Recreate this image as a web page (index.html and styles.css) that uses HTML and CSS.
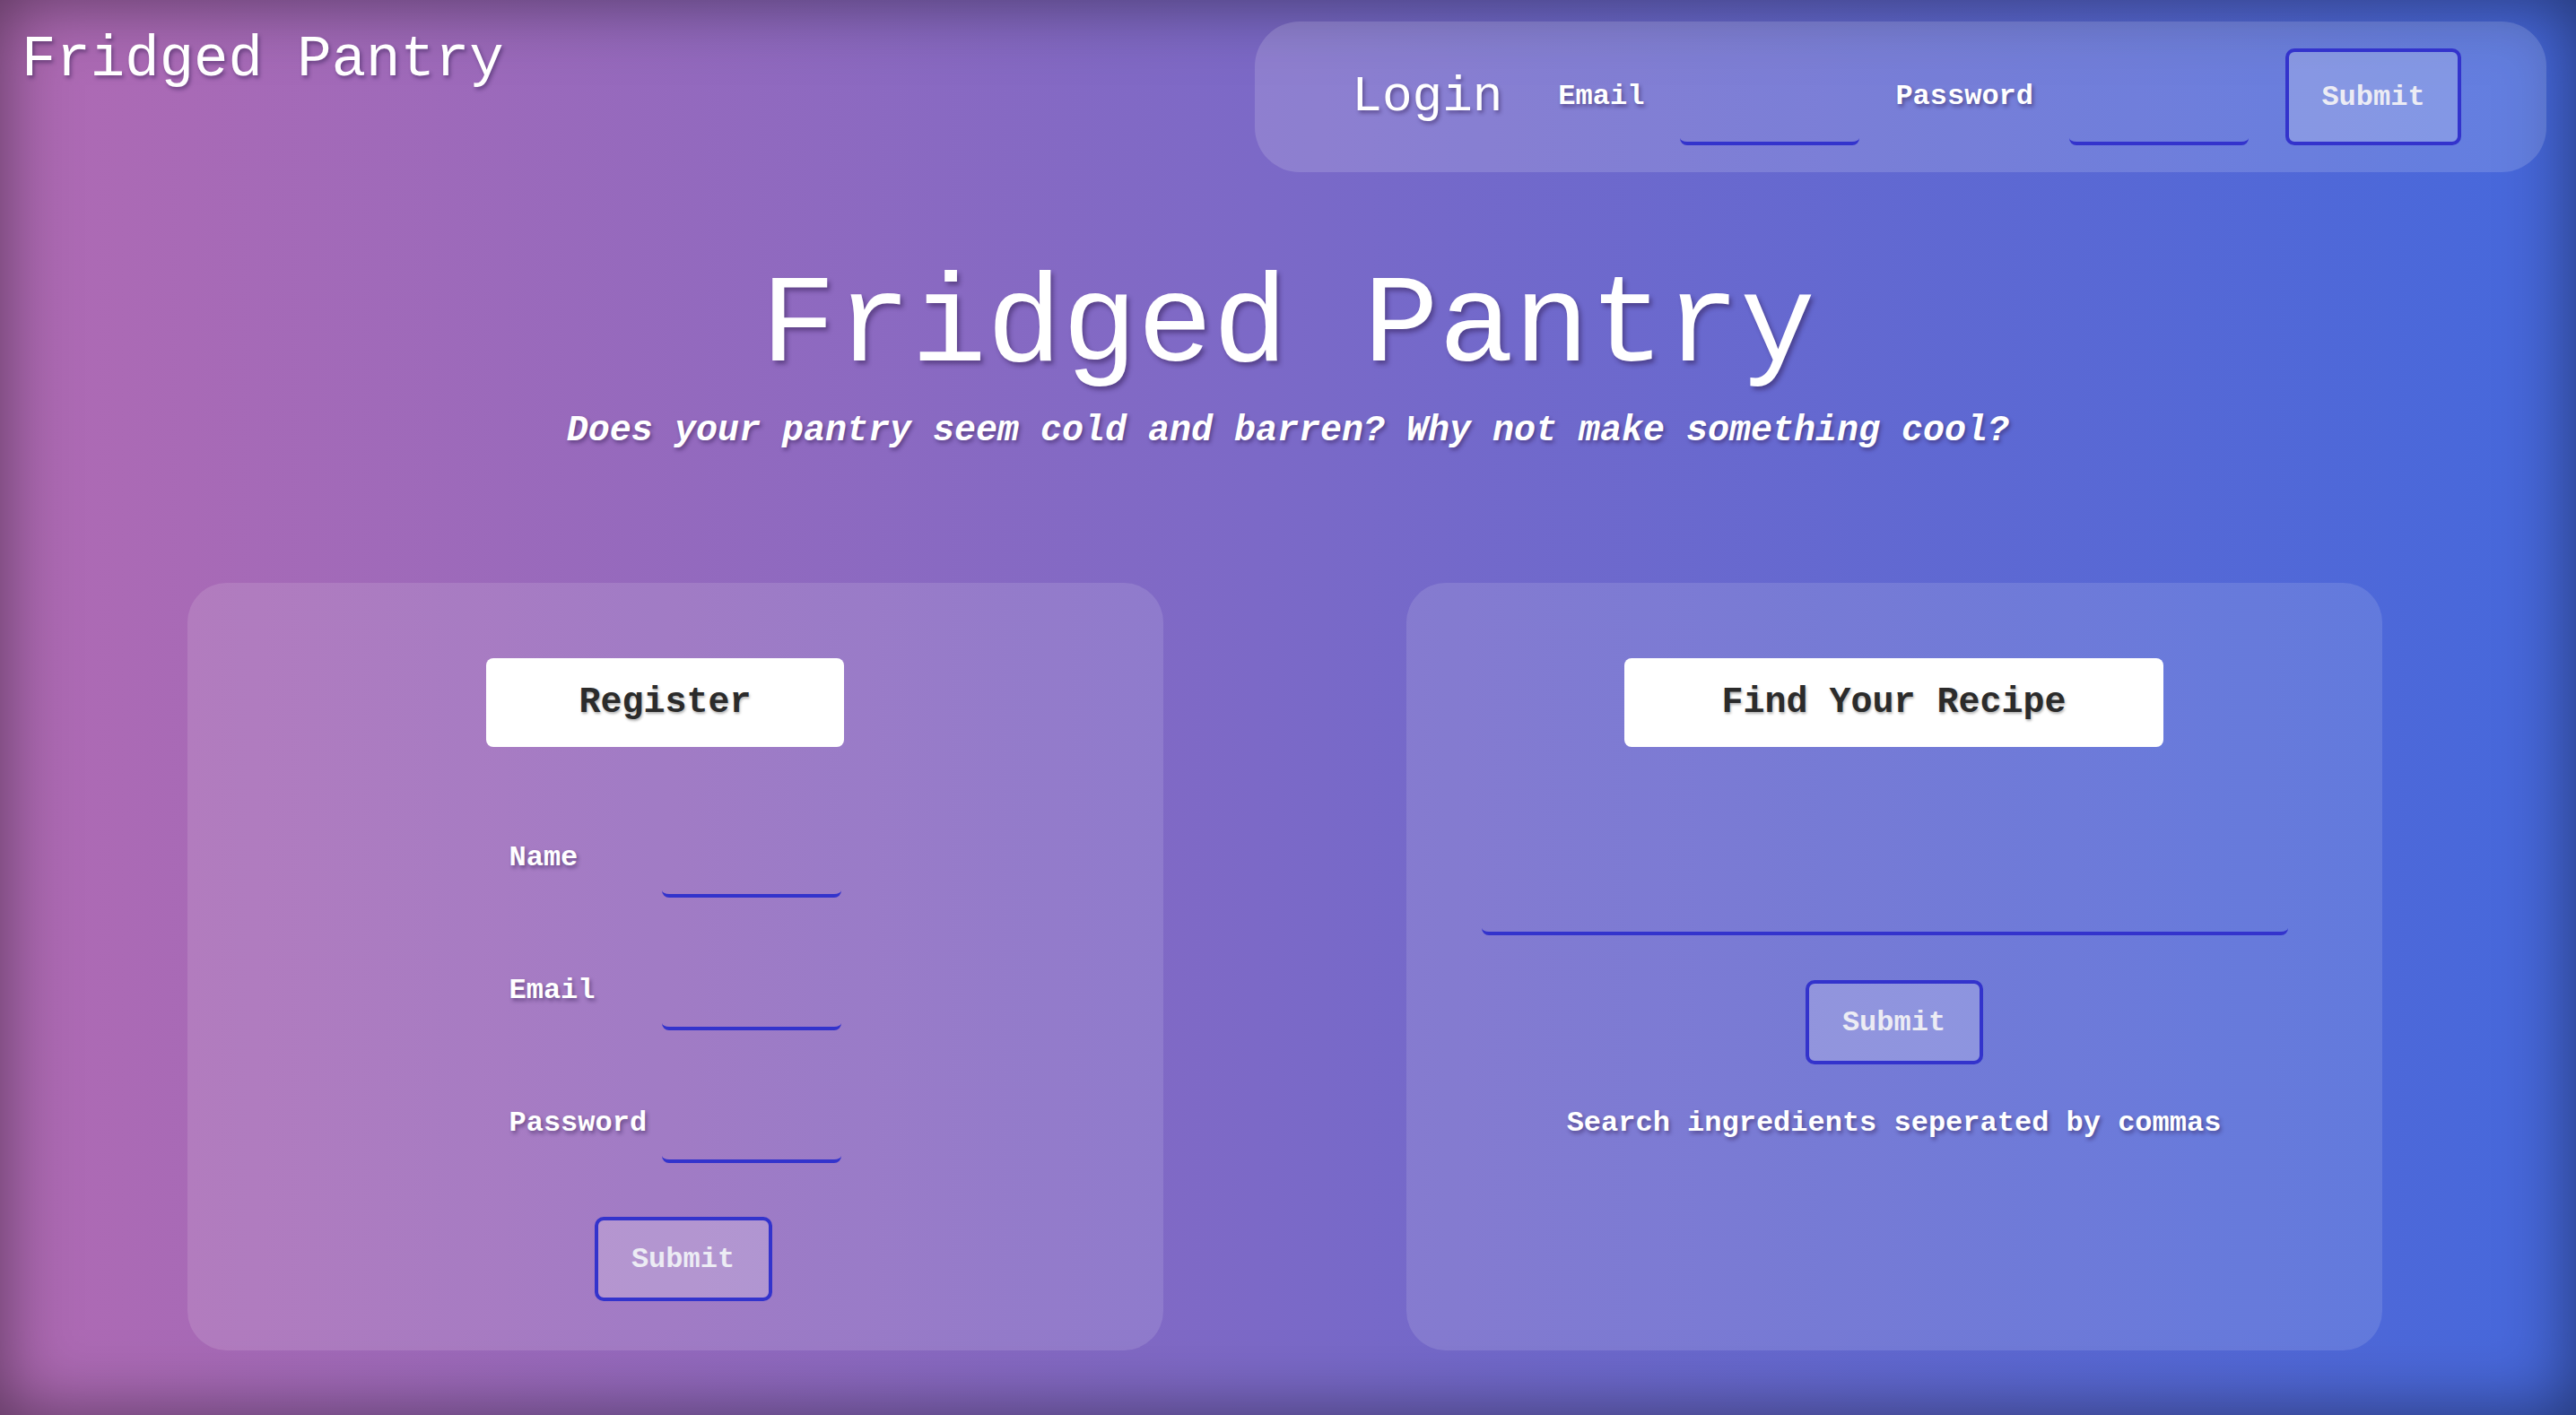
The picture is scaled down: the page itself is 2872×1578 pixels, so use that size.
FILE: index.html
```html
<!DOCTYPE html>
<html lang="en">
<head>
<meta charset="utf-8">
<title>Fridged Pantry</title>
<link rel="stylesheet" href="styles.css">
</head>
<body>
<div class="page">
  <header class="header">
    <div class="brand">Fridged Pantry</div>
    <form class="login">
      <h2 class="login-title">Login</h2>
      <label class="label">Email</label>
      <input class="field login-field" type="text">
      <label class="label">Password</label>
      <input class="field login-field" type="password">
      <button class="btn login-btn" type="button">Submit</button>
    </form>
  </header>

  <section class="hero">
    <h1 class="hero-title">Fridged Pantry</h1>
    <p class="hero-sub">Does your pantry seem cold and barren? Why not make something cool?</p>
  </section>

  <main class="cards">
    <div class="card card-register">
      <div class="reg-col">
        <div class="card-head">Register</div>
        <div class="row first-row">
          <label class="label">Name</label>
          <input class="field reg-field" type="text">
        </div>
        <div class="row">
          <label class="label">Email</label>
          <input class="field reg-field" type="text">
        </div>
        <div class="row">
          <label class="label">Password</label>
          <input class="field reg-field" type="password">
        </div>
        <button class="btn reg-btn" type="button">Submit</button>
      </div>
    </div>

    <div class="card card-search">
      <div class="card-head head-wide">Find Your Recipe</div>
      <input class="field search-field" type="text">
      <button class="btn search-btn" type="button">Submit</button>
      <p class="hint">Search ingredients seperated by commas</p>
    </div>
  </main>
</div>
</body>
</html>
```

FILE: styles.css
```css
* {
  box-sizing: border-box;
}

html, body {
  margin: 0;
  padding: 0;
}

body {
  font-family: "Liberation Mono", "Courier New", monospace;
  color: #ffffff;
  background: linear-gradient(to right, #b06ab3, #4568dc);
}

.page {
  height: 1578px;
  overflow: hidden;
  box-shadow: inset 0 0 80px rgba(0, 0, 0, 0.5);
}

/* ---------- header ---------- */
.header {
  display: flex;
  justify-content: space-between;
  align-items: flex-start;
  padding: 24px 33px 0 24px;
}

.brand {
  font-size: 64px;
  line-height: 72px;
  margin-top: 7px;
  text-shadow: 2px 3px 4px rgba(40, 20, 70, 0.45);
}

.login {
  display: flex;
  align-items: center;
  height: 168px;
  padding: 0 95px 0 108px;
  border-radius: 50px;
  background: rgba(255, 255, 255, 0.15);
}

.login-title {
  margin: 0 62px 0 0;
  font-size: 56px;
  font-weight: normal;
  line-height: 64px;
  text-shadow: 2px 3px 4px rgba(40, 20, 70, 0.45);
}

.label {
  font-size: 32px;
  font-weight: bold;
  line-height: 36px;
  color: #ffffff;
  text-shadow: 2px 3px 4px rgba(40, 20, 70, 0.45);
}

.field {
  display: block;
  background: transparent;
  border: none;
  border-bottom: 4px solid #3333cc;
  border-radius: 8px;
  outline: none;
  font-family: inherit;
  font-size: 32px;
  color: #ffffff;
}

.login-field {
  width: 200px;
  height: 108px;
  margin: 0 40px;
}

.btn {
  font-family: inherit;
  font-size: 32px;
  font-weight: bold;
  color: #ececf4;
  background: rgba(255, 255, 255, 0.2);
  border: 4px solid #3333cc;
  border-radius: 10px;
  cursor: pointer;
}

.login-btn {
  width: 196px;
  height: 108px;
  margin-left: 1px;
}

/* ---------- hero ---------- */
.hero {
  text-align: center;
}

.hero-title {
  margin: 94px 0 0;
  font-size: 140px;
  font-weight: normal;
  line-height: 158px;
  text-shadow: 3px 4px 5px rgba(40, 20, 70, 0.45);
}

.hero-sub {
  margin: 14px 0 0;
  font-size: 40px;
  line-height: 45px;
  font-style: italic;
  font-weight: bold;
  text-shadow: 2px 3px 4px rgba(40, 20, 70, 0.45);
}

/* ---------- cards ---------- */
.cards {
  display: flex;
  justify-content: center;
  gap: 271px;
  margin-top: 147px;
  padding-right: 8px;
}

.card {
  width: 1088px;
  height: 856px;
  border-radius: 44px;
  background: rgba(255, 255, 255, 0.12);
  padding-top: 84px;
}

.card-head {
  background: #ffffff;
  color: #2b2b2b;
  border-radius: 8px;
  font-size: 40px;
  font-weight: bold;
  line-height: 45px;
  padding: 27px 104px;
  text-align: center;
  text-shadow: 1px 2px 3px rgba(0, 0, 0, 0.3);
}

.head-wide {
  padding: 27px 108px;
}

.card-register {
  padding-left: 333px;
}

.reg-col {
  width: 399px;
  display: flex;
  flex-direction: column;
}

.row {
  display: flex;
  align-items: center;
  justify-content: space-between;
  height: 88px;
  padding: 0 3px 0 26px;
  margin-top: 60px;
}

.first-row {
  margin-top: 80px;
}

.reg-field {
  width: 200px;
  height: 88px;
}

.reg-btn {
  width: 198px;
  height: 94px;
  margin: 60px 0 0 121px;
}

.card-search {
  display: flex;
  flex-direction: column;
  align-items: center;
}

.search-field {
  width: 899px;
  height: 88px;
  margin: 122px 20px 0 0;
}

.search-btn {
  width: 198px;
  height: 94px;
  margin-top: 50px;
}

.hint {
  margin: 48px 0 0;
  font-size: 32px;
  font-weight: bold;
  line-height: 36px;
  text-shadow: 2px 3px 4px rgba(40, 20, 70, 0.45);
}
```
